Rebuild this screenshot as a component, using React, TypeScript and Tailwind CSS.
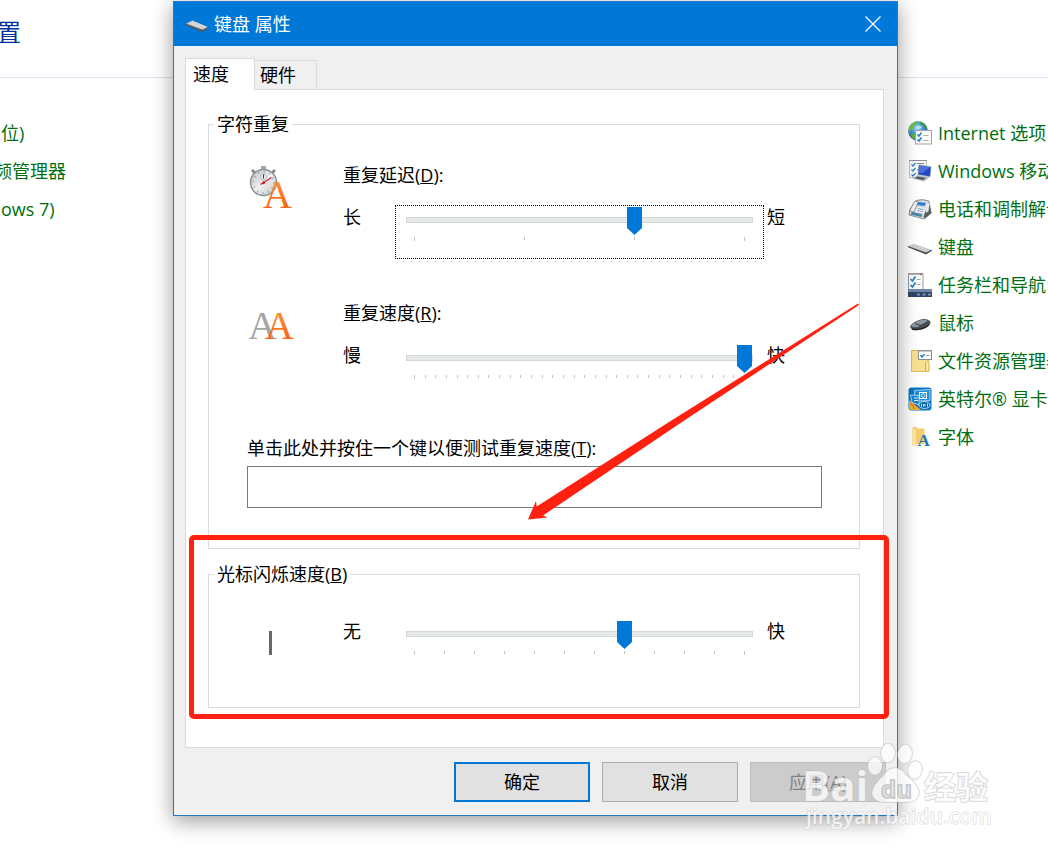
import { useState, type ReactNode } from 'react';

interface TrackbarProps {
  id: string;
  minText: string;
  maxText: string;
  steps: number;
  initial: number;
  focused?: boolean;
}

// 左侧列表只露出右半部分
const leftItems = [
  { text: '位)', cut: false },
  { text: '频管理器', cut: true },
  { text: 'ows 7)', cut: false },
];

const rightItems = [
  { text: 'Internet 选项', icon: <InternetIcon /> },
  { text: 'Windows 移动', icon: <MobilityIcon /> },
  { text: '电话和调制解调', icon: <PhoneIcon /> },
  { text: '键盘', icon: <KeyboardIcon /> },
  { text: '任务栏和导航', icon: <TaskbarIcon /> },
  { text: '鼠标', icon: <MouseIcon /> },
  { text: '文件资源管理器', icon: <ExplorerIcon /> },
  { text: '英特尔® 显卡', icon: <IntelIcon /> },
  { text: '字体', icon: <FontsIcon /> },
];

function Icon({ children }: { children: ReactNode }) {
  return (
    <svg viewBox="0 0 24 24" className="h-6 w-6 shrink-0" aria-hidden="true">
      {children}
    </svg>
  );
}

function InternetIcon() {
  return (
    <Icon>
      <defs>
        <radialGradient id="globe" cx="45%" cy="35%" r="70%">
          <stop offset="0" stopColor="#a9dcfa" />
          <stop offset="0.5" stopColor="#3b8bdc" />
          <stop offset="1" stopColor="#1c3f9a" />
        </radialGradient>
      </defs>
      <circle cx="10" cy="10" r="9.800" fill="url(#globe)" />
      <path d="M2 5 Q5 0.500 10 0.300 L9 3 L6 5 L5 8 L2 10 L1 13 Q0 8 2 5Z" fill="#6cc24a" />
      <path d="M12 0.500 Q18 2 19.500 8 L17 7.500 L15 4.500 L12.500 3.500Z" fill="#3f9a3a" />
      <path d="M2 13 L6 12 L7.500 15 L6.500 19 Q3 17 2 13Z" fill="#58ae43" />
      <path d="M7 6 L12 4.500 L14 6.500 L10 8.500Z" fill="#d9f1fc" opacity="0.7" />
      <rect x="7.500" y="9.500" width="16" height="13.500" fill="#fbfbfb" stroke="#a9a39c" />
      <path d="M9.500 13.500l1.500 1.500 2.500-3.500M9.500 18.500l1.500 1.500 2.500-3.500" fill="none" stroke="#2583c9" strokeWidth="1.500" />
      <path d="M15.500 14.500h5M15.500 19.500h5" stroke="#b2aca8" />
    </Icon>
  );
}

function MobilityIcon() {
  return (
    <Icon>
      <rect x="1.500" y="1.500" width="17" height="17" fill="#fafafa" stroke="#c5c5c5" />
      <path d="M1 1.500h18" stroke="#8a8f98" />
      <path d="M3.500 5.500l1.500 1.500 2.500-3M3.500 10.500l1.500 1.500 2.500-3M3.500 15.500l1.500 1.500 2.500-3" fill="none" stroke="#2583c9" strokeWidth="1.200" />
      <path d="M9 4.500h7M9 10.500h4" stroke="#888" />
      <path d="M11 6 L23 8 L22 17.500 L10 15.500Z" fill="#2348c4" stroke="#7788aa" strokeWidth="0.600" />
      <path d="M11.500 6.500 L22 8 L15 14 L10.500 14Z" fill="#6a8cf0" opacity="0.6" />
      <path d="M10 16 L22 18 L16 22.500 L4 19.500Z" fill="#b9bdc3" />
      <path d="M9 17.500 L18 19 L15 21 L7 19.200Z" fill="#4f545c" />
    </Icon>
  );
}

function PhoneIcon() {
  return (
    <Icon>
      <path d="M8 3.500 Q14 1.500 21 4 L23 16 L16 22 L1 18 L2 12Z" fill="#d5d8db" stroke="#7a7d80" strokeWidth="0.800" />
      <path d="M10 5 L18 6 L16.500 9 L9 8Z" fill="#2b7fd0" />
      <path d="M7 4 L10 5 L6 15 L1.500 14Z" fill="#f4f5f6" stroke="#666" strokeWidth="0.600" />
      <path d="M9 10 L17 11 L15.500 16.500 L7 15Z" fill="#eef3f7" />
      <path d="M4 15 L14 17 L13.500 20 L2.500 17.500Z" fill="#4287ac" />
      <path d="M18 7 L21.500 8 L23.500 16 L17 21.500 L15.500 20 L18 13Z" fill="#5a5d61" />
      <path d="M18 6 L21.500 7 L20.500 14 L18 16Z" fill="#e7e9eb" />
      <path d="M9.500 11.500l6 1M9 13.500l6 1" stroke="#6c8db0" strokeWidth="0.800" />
    </Icon>
  );
}

function KeyboardIcon() {
  return (
    <Icon>
      <path d="M0 11 L6 9 L24 15 L18 18.500Z" fill="#bdc1c4" />
      <path d="M0 11 L18 17.500 L24 14.800 V15.800 L18 19.500 L0 12.200Z" fill="#4c4f52" />
      <path d="M2.500 11 L18 16.300M5 10 L20.500 15.300" stroke="#e6e8ea" strokeDasharray="1.500 0.700" />
    </Icon>
  );
}

function TaskbarIcon() {
  return (
    <Icon>
      <rect x="0.500" y="0.500" width="14.500" height="16" fill="#fbfbfb" stroke="#9a9a9a" />
      <path d="M1 1.500h11" stroke="#b7bac0" />
      <path d="M12 1.500h2" stroke="#d23b2e" />
      <path d="M2.500 6l2 2 3-4.500M2.500 12l2 2 3-4.500" fill="none" stroke="#2583c9" strokeWidth="1.700" />
      <path d="M9 6.500h3.500M9 11.500h3.500" stroke="#a6a6a6" />
      <rect x="0" y="16" width="24" height="8" fill="#2f4468" />
      <rect x="0" y="16" width="24" height="3" fill="#7288ab" />
      <path d="M9 21.500h3M14.500 21.500h3M20 21.500h3" stroke="#8192b0" strokeWidth="2" />
    </Icon>
  );
}

function MouseIcon() {
  return (
    <Icon>
      <path d="M2 16 Q3 12 11 9 Q18 6.500 22 10 Q24 13 18 17 Q10 20.500 4 18.500Z" fill="#4c5055" />
      <path d="M3 15 Q5 11.500 12 9.300 Q17 8 20 10 L11 15.500 Q5 17 3 15Z" fill="#8d98a3" />
      <path d="M7 12.500 L13 14.500M11 15.500 L20 10.500" stroke="#3c4046" />
      <path d="M4 18 Q12 20 21 14" stroke="#26282b" fill="none" strokeWidth="1.500" />
    </Icon>
  );
}

function ExplorerIcon() {
  return (
    <Icon>
      <path d="M3.500 1.500h8v3h9v18h-17z" fill="#f9e192" stroke="#e2bd5c" />
      <path d="M17.500 22.500v-9l2-1.500 1.500 1.500v9z" fill="#fae7a4" stroke="#d9ae49" />
      <rect x="10.500" y="1.500" width="13" height="9" fill="#fff" stroke="#8b8b8b" />
      <path d="M11 2h12.500" stroke="#999" />
      <path d="M12.500 6l1.500 2 2.500-3" fill="none" stroke="#2583c9" strokeWidth="1.400" />
      <path d="M17.500 6.500h4" stroke="#a5a5a5" />
    </Icon>
  );
}

function IntelIcon() {
  return (
    <Icon>
      <rect x="0.500" y="0.500" width="23" height="23" rx="3" fill="#0877c3" />
      <path d="M1 13 L13 23 H3 Q1 23 1 20Z" fill="#eab52c" />
      <path d="M2 17l3 1 1 4M5 16l4 4" stroke="#d96a2a" fill="none" />
      <path d="M6.500 3.500 L22 2.500 V13.500 L6.500 14Z" fill="#1d91da" stroke="#bfe3f9" strokeWidth="0.800" />
      <path d="M2.500 8 L11 8.500 V18 L4 15.500Z" fill="#1486d0" stroke="#bfe3f9" strokeWidth="0.800" />
      <rect x="11.500" y="5.500" width="7" height="6" fill="none" stroke="#fff" />
      <circle cx="15" cy="8.500" r="1.800" fill="none" stroke="#fff" strokeWidth="0.800" />
      <path d="M6 11h4M6 13.500h4" stroke="#d6edfb" />
      <ellipse cx="16.500" cy="18" rx="5.500" ry="3.500" fill="#0c69b0" stroke="#e3f2fb" strokeWidth="0.800" />
      <path d="M13.500 17v2.500M15.500 19.500v-2h1.500v2M19.500 16.500v3" stroke="#fff" fill="none" strokeWidth="0.800" />
    </Icon>
  );
}

function FontsIcon() {
  return (
    <Icon>
      <path d="M4 2.500 L9 1.500 V3.500 H16.500 V19 H9 L4 20.500Z" fill="#f3cf70" />
      <path d="M4 2.500 L8 4.500 V22 L4 19.500Z" fill="#fbe6a6" />
      <text x="9.500" y="21" fontFamily="Liberation Serif, serif" fontWeight="700" fontSize="17" fill="#1d74bd">A</text>
    </Icon>
  );
}

function DelayIcon() {
  return (
    <svg viewBox="0 0 48 48" className="h-12 w-12" aria-hidden="true">
      <defs>
        <linearGradient id="orange" x1="0" y1="0" x2="0" y2="1">
          <stop offset="0" stopColor="#ff9a3c" />
          <stop offset="1" stopColor="#f8580c" />
        </linearGradient>
        <linearGradient id="dial" x1="0" y1="0" x2="1" y2="1">
          <stop offset="0" stopColor="#b6bbbe" />
          <stop offset="0.500" stopColor="#eff0f1" />
          <stop offset="1" stopColor="#bfc3c6" />
        </linearGradient>
      </defs>
      <rect x="12" y="3" width="5" height="4" fill="#a3abb0" />
      <path d="M3 7l4 4M26 7l-4 4" stroke="#7f898f" strokeWidth="3" />
      <circle cx="14.500" cy="19.500" r="13" fill="url(#dial)" stroke="#8b9296" strokeWidth="1.500" />
      <circle cx="14.500" cy="19.500" r="10.500" fill="none" stroke="#8b9296" strokeWidth="2" strokeDasharray="0.800 4.700" />
      <circle cx="14.500" cy="14" r="3" fill="#e9ebec" stroke="#a9afb3" strokeWidth="0.800" />
      <path d="M14.500 11.500v4" stroke="#333" />
      <path d="M11.500 21.500 L22.500 14.500" stroke="#d3202e" strokeWidth="1.300" />
      <circle cx="14.500" cy="19.800" r="1.500" fill="#d3202e" />
      <text x="14" y="45" fontFamily="Liberation Serif, serif" fontSize="40" fill="url(#orange)">A</text>
    </svg>
  );
}

function RateIcon() {
  return (
    <svg viewBox="0 0 48 48" className="h-12 w-12" aria-hidden="true">
      <text x="-1" y="38" fontFamily="Liberation Serif, serif" fontSize="40" fill="#a3a5a7">A</text>
      <text x="16" y="38" fontFamily="Liberation Serif, serif" fontSize="40" fill="url(#orange)">A</text>
    </svg>
  );
}

function Trackbar({ id, minText, maxText, steps, initial, focused }: TrackbarProps) {
  const [value, setValue] = useState(initial);

  return (
    <div className="flex items-start">
      <span className="w-[52px]">{minText}</span>
      <div className={`h-[54px] min-w-0 flex-1 border px-[10px] pt-px ${focused ? 'border-dotted border-black' : 'border-transparent'}`}>
        <div className="grid">
          <div className="col-start-1 row-start-1 mt-[10px] h-[6px] border border-[#d6d6d6] bg-[#e7eaea]" />
          <input
            id={id}
            type="range"
            min={0}
            max={steps}
            value={value}
            onChange={(e) => setValue(Number(e.target.value))}
            className="col-start-1 row-start-1 mx-px h-[28px] min-w-0 appearance-none bg-transparent outline-none [&::-webkit-slider-thumb]:h-[28px] [&::-webkit-slider-thumb]:w-[15px] [&::-webkit-slider-thumb]:appearance-none [&::-webkit-slider-thumb]:bg-[#0078d7] [&::-webkit-slider-thumb]:[clip-path:polygon(0_0,100%_0,100%_75%,50%_100%,0_75%)]"
          />
        </div>
        <div className="mx-[8px] mt-[2px] flex justify-between">
          {Array.from({ length: steps + 1 }, (_, i) => (
            <span key={i} className={`w-px bg-[#c4c4c4] ${i === 0 || i === steps ? 'h-[4px]' : 'h-[3px]'}`} />
          ))}
        </div>
      </div>
      <span className="pl-[3px]">{maxText}</span>
    </div>
  );
}

function Watermark() {
  return (
    <svg viewBox="0 0 200 96" className="pointer-events-none absolute -right-[100px] -bottom-[20px] h-[96px] w-[200px]" aria-hidden="true">
      <g fill="#fff" fillOpacity="0.75" stroke="#b9b9b9" strokeOpacity="0.6" strokeWidth="1.500" style={{ paintOrder: 'stroke' }}>
        <ellipse cx="78" cy="27" rx="7" ry="9" />
        <ellipse cx="91" cy="14" rx="7" ry="9.500" />
        <ellipse cx="108" cy="15" rx="7" ry="9.500" transform="rotate(8 108 15)" />
        <ellipse cx="118" cy="31" rx="7" ry="9" transform="rotate(10 118 31)" />
        <path d="M98 29 Q105 29 109 36 Q122 46 122 54 Q121 63 111 63 H85 Q76 62 75 54 Q76 46 87 36 Q91 29 98 29Z" />
        <text x="5" y="62" fontFamily="Open Sans, sans-serif" fontWeight="700" fontSize="42">Bai</text>
        <text x="84" y="59" fontFamily="Open Sans, sans-serif" fontWeight="700" fontSize="24" fill="#d4d4d4" fillOpacity="0.6" strokeOpacity="0.9">du</text>
        <text x="127" y="60" fontFamily="Noto Sans CJK SC, sans-serif" fontWeight="700" fontSize="32">经验</text>
        <text x="9" y="85" fontFamily="Open Sans, sans-serif" fontWeight="600" fontSize="21" strokeWidth="1">jingyan.baidu.com</text>
      </g>
    </svg>
  );
}

export default function App() {
  return (
    <div className="relative min-h-screen overflow-hidden bg-white font-['Open_Sans','Noto_Sans_CJK_SC',sans-serif] text-[18px] leading-6 text-black">
      {/* 控制面板背景 */}
      <header className="h-[78px] border-b border-[#d9e3f3] pt-4">
        <h1 className="-ml-[3px] text-[24px] leading-8 text-[#003399]">置</h1>
      </header>
      <main className="flex justify-between pt-9">
        <ul className="text-[#006f10]">
          {leftItems.map((item) => (
            <li key={item.text} className={`h-[38px] whitespace-nowrap ${item.cut ? '-ml-[6px]' : 'ml-px'}`}>
              <a href="#" className="leading-[38px]">{item.text}</a>
            </li>
          ))}
        </ul>
        <ul className="w-[140px] text-[#006f10]">
          {rightItems.map((item) => (
            <li key={item.text} className="h-[38px] whitespace-nowrap">
              <a href="#" className="flex h-full items-center gap-[6px]">
                {item.icon}
                <span>{item.text}</span>
              </a>
            </li>
          ))}
        </ul>
      </main>

      {/* 键盘属性窗口 */}
      <section
        role="dialog"
        aria-labelledby="dialog-title"
        className="absolute top-px right-[150px] left-[173px] border border-[#1b7bc9] bg-[#f0f0f0] shadow-[0_5px_20px_rgba(0,0,0,0.4)]"
      >
        <div className="flex h-[44px] items-center bg-[#0078d7] pr-[16px] pb-px pl-[12px] text-white">
          <svg viewBox="0 0 24 14" className="mt-1 h-[14px] w-[22px]" aria-hidden="true">
            <path d="M0 4.500 L7 1 L24 8 L18 12Z" fill="#c9cbcc" />
            <path d="M0 4.500 L18 11 L24 8 V9 L18 13.500 L0 6Z" fill="#5b564f" />
            <path d="M4 3.500 L18 9 M7 2.300 L21 7.800" stroke="#eeeeee" strokeDasharray="1.500 0.800" />
          </svg>
          <h2 id="dialog-title" className="flex-1 pl-[6px]">键盘 属性</h2>
          <button type="button" aria-label="关闭" className="p-0">
            <svg viewBox="0 0 16 16" className="h-4 w-4" aria-hidden="true">
              <path d="M0.500 0.500l15 15M15.500 0.500l-15 15" stroke="#fff" strokeWidth="1.200" />
            </svg>
          </button>
        </div>

        <div className="pt-[12px] pr-[13px] pl-[11px]">
          <div role="tablist" className="flex items-end">
            <button type="button" role="tab" aria-selected="true" className="relative -mb-px h-[32px] w-[70px] border border-b-0 border-[#dcdcdc] bg-white pb-[2px] pl-[7px] text-left">
              速度
            </button>
            <button type="button" role="tab" aria-selected="false" className="-ml-px h-[29px] w-[63px] border border-b-0 border-[#dcdcdc] pl-[5px] text-left">
              硬件
            </button>
          </div>

          <div role="tabpanel" className="flex flex-col gap-[14px] border border-[#dcdcdc] bg-white pt-[23px] pr-[23px] pb-[39px] pl-[22px]">
            <div className="relative">
              <fieldset className="border border-[#dcdcdc] pb-[40px]">
                <legend className="ml-[5px] px-[3px] leading-[22px]">字符重复</legend>
                <div className="flex pt-[28px] pr-[74px] pl-[40px]">
                  <div className="w-[94px] shrink-0"><DelayIcon /></div>
                  <div className="flex min-w-0 flex-1 flex-col gap-[18px]">
                    <label htmlFor="delay">重复延迟(<u>D</u>):</label>
                    <Trackbar id="delay" minText="长" maxText="短" steps={3} initial={2} focused />
                  </div>
                </div>
                <div className="flex pt-[42px] pr-[74px] pl-[40px]">
                  <div className="w-[94px] shrink-0"><RateIcon /></div>
                  <div className="flex min-w-0 flex-1 flex-col gap-[18px]">
                    <label htmlFor="rate">重复速度(<u>R</u>):</label>
                    <Trackbar id="rate" minText="慢" maxText="快" steps={31} initial={31} />
                  </div>
                </div>
                <div className="flex flex-col gap-[6px] pt-[39px] pr-[37px] pl-[38px]">
                  <label htmlFor="test">单击此处并按住一个键以便测试重复速度(<u>T</u>):</label>
                  <input id="test" type="text" className="h-[42px] w-full border border-[#7a7a7a] bg-white px-2 outline-none" />
                </div>
              </fieldset>
              {/* 红色箭头 */}
              <svg viewBox="0 0 332 222" className="pointer-events-none absolute top-[188px] left-[320px] h-[222px] w-[332px]" aria-hidden="true">
                <path d="M0 218.500 L8 200 L8.700 205.500 L145 118.500 L330 2.500 L331 4 L157 119 L15 214.500 L19.500 216.500Z" fill="#ff2010" />
              </svg>
            </div>

            <div className="relative">
              <fieldset className="border border-[#dcdcdc] pb-[34px]">
                <legend className="ml-[5px] px-[3px] leading-[22px]">
                  <label htmlFor="blink">光标闪烁速度(<u>B</u>)</label>
                </legend>
                <div className="flex pt-[34px] pr-[74px] pl-[40px]">
                  <div className="w-[94px] shrink-0">
                    <div className="mt-3 ml-5 h-6 w-[3px] bg-[#696969]" />
                  </div>
                  <div className="min-w-0 flex-1">
                    <Trackbar id="blink" minText="无" maxText="快" steps={11} initial={7} />
                  </div>
                </div>
              </fieldset>
              {/* 红色标注框 */}
              <div className="pointer-events-none absolute -top-[28px] -right-[29px] -bottom-[11px] -left-[19px] rounded-[5px] border-[5px] border-[#ff2010]" />
            </div>
          </div>
        </div>

        <div className="flex justify-end gap-3 pt-[14px] pr-[11px] pb-[13px]">
          <button type="button" className="h-[40px] w-[136px] border-2 border-[#0078d7] bg-[#e1e1e1]">确定</button>
          <button type="button" className="h-[40px] w-[136px] border border-[#adadad] bg-[#e1e1e1]">取消</button>
          <button type="button" disabled className="h-[40px] w-[136px] border border-[#bfbfbf] bg-[#cccccc] text-[#838383]">
            应用(<u>A</u>)
          </button>
        </div>
        <Watermark />
      </section>
    </div>
  );
}
